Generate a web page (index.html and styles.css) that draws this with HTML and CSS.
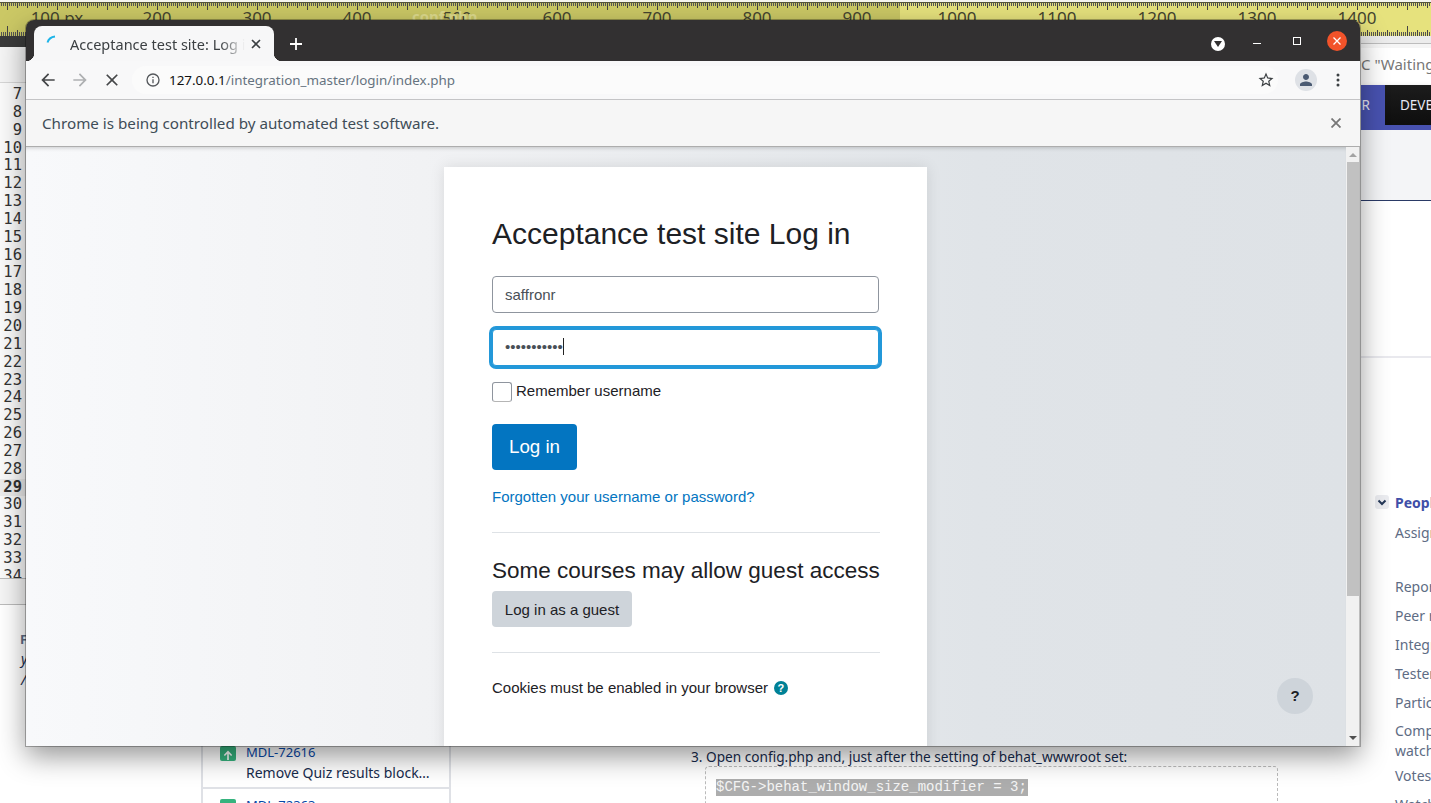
FILE: index.html
```html
<!DOCTYPE html>
<html lang="en">
<head>
  <meta charset="UTF-8">
  <title>Acceptance test site: Log in to the site</title>
  <link rel="stylesheet" href="styles.css">
</head>
<body>
  <div class="desktop">
    <div class="ruler">
      <span class="ruler-file">conf.php</span>
      <div class="ruler-marks">
        <span>100 px</span><span>200</span><span>300</span><span>400</span><span>500</span><span>600</span><span>700</span><span>800</span><span>900</span><span>1000</span><span>1100</span><span>1200</span><span>1300</span><span>1400</span>
      </div>
    </div>

    <div class="back">
      <div class="editor-col">
        <div class="editor-top"></div>
        <div class="gutter">
          <div>7</div><div>8</div><div>9</div><div>10</div><div>11</div><div>12</div><div>13</div><div>14</div><div>15</div><div>16</div><div>17</div><div>18</div><div>19</div><div>20</div><div>21</div><div>22</div><div>23</div><div>24</div><div>25</div><div>26</div><div>27</div><div>28</div><div class="current">29</div><div>30</div><div>31</div><div>32</div><div>33</div><div>34</div>
        </div>
        <div class="editor-status"></div>
        <div class="field-label">F</div>
        <div class="field-text">y</div>
        <div class="field-text">/</div>
      </div>

      <div class="issues-col">
        <div class="issue">
          <span class="issue-icon"><svg viewBox="0 0 16 16" width="16" height="16"><path d="M8 3.500 3.800 8l1.100 1.100L7.200 6.700V13h1.600V6.700l2.300 2.400L12.200 8z" fill="#fff"/></svg></span>
          <div>
            <div class="issue-key">MDL-72616</div>
            <div class="issue-name">Remove Quiz results block…</div>
          </div>
        </div>
        <div class="issue">
          <span class="issue-icon"></span>
          <div>
            <div class="issue-key">MDL-72363</div>
          </div>
        </div>
      </div>

      <div class="steps-col">
        <div class="step">3. Open config.php and, just after the setting of behat_wwwroot set:</div>
        <div class="code-box"><code>$CFG-&gt;behat_window_size_modifier = 3;</code></div>
      </div>

      <div class="side-col">
        <div class="side-bar"></div>
        <div class="side-search">C "Waiting for</div>
        <div class="side-nav">
          <span class="nav-purple">ER</span>
          <span class="nav-black">DEVELOP</span>
        </div>
        <div class="side-sub"></div>
        <div class="side-body"></div>
        <div class="people">
          <div class="people-head">
            <span class="toggle"><svg viewBox="0 0 14 14" width="14" height="14"><path d="M3.500 5.500 7 9l3.500-3.500" fill="none" stroke="#253858" stroke-width="2"/></svg></span>
            <b>People</b>
          </div>
          <div class="people-row assign">Assignee</div>
          <div class="people-row">Reporter</div>
          <div class="people-row">Peer reviewer</div>
          <div class="people-row">Integrator</div>
          <div class="people-row">Tester</div>
          <div class="people-row">Participants</div>
          <div class="people-row double">Component<br>watchers</div>
          <div class="people-row">Votes</div>
          <div class="people-row">Watchers</div>
        </div>
      </div>
    </div>

    <div class="browser">
      <div class="titlebar">
        <div class="tab">
          <svg class="spinner" viewBox="0 0 12 10" width="12" height="10"><path d="M1.500 7.500C2.500 4 5 2 9 1.500" fill="none" stroke="#1eb4e8" stroke-width="2"/></svg>
          <span class="tab-title">Acceptance test site: Log in to the site</span>
          <svg class="tab-close" viewBox="0 0 10 10" width="10" height="10"><path d="M1 1l8 8M9 1l-8 8" stroke="#3c4043" stroke-width="1.600"/></svg>
        </div>
        <svg class="new-tab" viewBox="0 0 12 12" width="12" height="12"><path d="M6 0v12M0 6h12" stroke="#fff" stroke-width="1.800"/></svg>
        <div class="win-controls">
          <span class="win-menu"><svg viewBox="0 0 8 6" width="8" height="6"><path d="M0 0h8L4 6z" fill="#323031"/></svg></span>
          <span class="win-min"></span>
          <span class="win-max"></span>
          <span class="win-close"><svg viewBox="0 0 10 10" width="10" height="10"><path d="M1.500 1.500l7 7M8.500 1.500l-7 7" stroke="#fff" stroke-width="1.300"/></svg></span>
        </div>
      </div>

      <div class="toolbar">
        <svg class="tool" viewBox="0 0 24 24" width="20" height="20"><path fill="#454749" d="M20 11H7.830l5.590-5.590L12 4l-8 8 8 8 1.410-1.410L7.830 13H20v-2z"/></svg>
        <svg class="tool" viewBox="0 0 24 24" width="20" height="20"><path fill="#aeb0b2" d="M4 11h12.170l-5.590-5.590L12 4l8 8-8 8-1.410-1.410L16.170 13H4v-2z"/></svg>
        <svg class="tool" viewBox="0 0 24 24" width="20" height="20"><path fill="#454749" d="M19 6.410 17.590 5 12 10.590 6.410 5 5 6.410 10.590 12 5 17.590 6.410 19 12 13.410 17.590 19 19 17.590 13.410 12z"/></svg>
        <div class="omnibox">
          <svg viewBox="0 0 24 24" width="16" height="16"><path fill="#55585c" d="M11 7h2v2h-2zm0 4h2v6h-2zm1-9a10 10 0 1 0 0 20 10 10 0 0 0 0-20zm0 18a8 8 0 1 1 0-16 8 8 0 0 1 0 16z"/></svg>
          <span class="url"><b>127.0.0.1</b>/integration_master/login/index.php</span>
          <svg class="star" viewBox="0 0 24 24" width="18" height="18"><path fill="#3c4043" d="M22 9.240l-7.190-.620L12 2 9.190 8.630 2 9.240l5.460 4.730L5.820 21 12 17.270 18.180 21l-1.630-7.030L22 9.240zM12 15.400l-3.760 2.270 1-4.280-3.320-2.880 4.380-.380L12 6.100l1.710 4.040 4.380.380-3.320 2.880 1 4.280L12 15.400z"/></svg>
        </div>
        <span class="avatar"><svg viewBox="0 0 24 24" width="18" height="18"><path fill="#4a5a72" d="M12 12c2.200 0 4-1.800 4-4s-1.800-4-4-4-4 1.800-4 4 1.800 4 4 4zm0 2c-2.700 0-8 1.300-8 4v2h16v-2c0-2.700-5.300-4-8-4z"/></svg></span>
        <svg class="dots" viewBox="0 0 4 14" width="4" height="14"><circle cx="2" cy="2" r="1.500" fill="#3c4043"/><circle cx="2" cy="7" r="1.500" fill="#3c4043"/><circle cx="2" cy="12" r="1.500" fill="#3c4043"/></svg>
      </div>

      <div class="infobar">
        <span>Chrome is being controlled by automated test software.</span>
        <svg viewBox="0 0 10 10" width="10" height="10"><path d="M.5.500l9 9M9.500.500l-9 9" stroke="#777" stroke-width="1.800"/></svg>
      </div>

      <div class="viewport">
        <div class="page">
          <div class="login-card">
            <h1>Acceptance test site Log in</h1>
            <input class="field" type="text" value="saffronr">
            <div class="field field-focus"><span>•••••••••••</span><i class="caret"></i></div>
            <label class="remember"><span class="checkbox"></span>Remember username</label>
            <button class="btn-primary">Log in</button>
            <p class="forgot"><a href="#">Forgotten your username or password?</a></p>
            <hr>
            <h2>Some courses may allow guest access</h2>
            <button class="btn-guest">Log in as a guest</button>
            <hr class="rule-two">
            <p class="cookies">Cookies must be enabled in your browser <span class="help">?</span></p>
          </div>
          <span class="help-fab">?</span>
        </div>
        <div class="scrollbar">
          <span class="arrow-up"></span>
          <span class="thumb"></span>
          <span class="arrow-down"></span>
        </div>
      </div>
    </div>
  </div>
</body>
</html>
```

FILE: styles.css
```css
* {
  box-sizing: border-box;
}

html, body {
  margin: 0;
  height: 100%;
  overflow: hidden;
  background: #fff;
}

.desktop {
  position: relative;
  width: 1431px;
  height: 803px;
  overflow: hidden;
  display: flex;
  flex-direction: column;
  font-family: "Noto Sans", sans-serif;
}

/* screen ruler across the top */
.ruler {
  position: relative;
  height: 36px;
  flex: none;
  background:
    linear-gradient(#55553a, #55553a) 0 2px / 100% 1px no-repeat,
    linear-gradient(90deg, #444 1px, transparent 1px) 7px 3px / 50px 7px repeat-x,
    linear-gradient(90deg, #444 1px, transparent 1px) 7px 3px / 10px 5px repeat-x,
    linear-gradient(90deg, #555 1px, transparent 1px) 1px 3px / 2px 3px repeat-x,
    linear-gradient(90deg, #444 1px, transparent 1px) 7px 26px / 50px 10px repeat-x,
    linear-gradient(90deg, #444 1px, transparent 1px) 7px 30px / 10px 6px repeat-x,
    linear-gradient(90deg, #555 1px, transparent 1px) 1px 32px / 2px 4px repeat-x,
    linear-gradient(#f4f4ee, #f4f4ee) 0 0 / 100% 2px no-repeat,
    linear-gradient(90deg, #cbc865 900px, #e6e27d 900px);
}

.ruler-file {
  position: absolute;
  left: 412px;
  top: 6px;
  font-size: 15px;
  font-weight: 700;
  color: #dedb8e;
}

.ruler-marks {
  display: flex;
  padding: 7px 0 0 7px;
  font-size: 17px;
  line-height: 22px;
  color: #45452f;
}

.ruler-marks span {
  width: 100px;
  flex: none;
  text-align: center;
}

/* windows behind the browser */
.back {
  flex: 1;
  display: grid;
  grid-template-columns: 201px 250px 1fr 70px;
  min-height: 0;
}

.editor-col {
  overflow: hidden;
}

.editor-top {
  height: 47px;
  background: linear-gradient(#3b3b3b 11px, #f5f5f5 11px);
  border-bottom: 1px solid #d6d6d6;
}

.gutter {
  height: 495px;
  padding-top: 3px;
  overflow: hidden;
  background: #fafafa;
  font-family: "DejaVu Sans Mono", monospace;
  font-size: 15.500px;
  line-height: 17.850px;
  color: #333;
}

.gutter div {
  width: 22px;
  text-align: right;
}

.gutter .current {
  width: 100%;
  padding-right: 179px;
  background: #ececec;
  font-weight: 700;
}

.editor-status {
  height: 27px;
  background: #f5f5f5;
  border-top: 1px solid #bbb;
  border-bottom: 1px solid #bbb;
}

.field-label {
  margin: 25px 0 0 20px;
  font-size: 13px;
  font-weight: 700;
  color: #5e6c84;
}

.field-text {
  margin-left: 21px;
  font-size: 14px;
  line-height: 21px;
  font-style: italic;
  color: #172b4d;
}

.issues-col {
  padding-top: 700px;
  overflow: hidden;
}

.issue {
  display: flex;
  gap: 10px;
  height: 53px;
  padding: 10px 0 0 17px;
  border-left: 2px solid #dfe1e6;
  border-right: 2px solid #dfe1e6;
  border-bottom: 2px solid #dfe1e6;
}

.issue-icon {
  width: 16px;
  height: 15px;
  flex: none;
  border-radius: 2px;
  background: #36b37e;
}

.issue-key {
  font-size: 13px;
  line-height: 13px;
  color: #0747a6;
}

.issue-name {
  margin-top: 4px;
  font-size: 14px;
  line-height: 20px;
  color: #172b4d;
  white-space: nowrap;
}

.steps-col {
  padding: 711px 0 0 240px;
  overflow: hidden;
}

.step {
  font-size: 13.650px;
  line-height: 20px;
  color: #172b4d;
}

.code-box {
  width: 573px;
  height: 60px;
  margin: -1px 0 0 14px;
  padding: 12px 10px;
  border: 1px dashed #bbb;
  border-radius: 4px;
}

.code-box code {
  display: block;
  width: 312px;
  background: #adadad;
  font-family: "Liberation Mono", monospace;
  font-size: 14px;
  line-height: 17px;
  color: #f4f4f4;
}

.side-col {
  overflow: hidden;
  white-space: nowrap;
  background: #fff;
}

.side-bar {
  height: 12px;
  background: linear-gradient(#ececec 7px, #bdbdbd 7px, #bdbdbd 8px, #f5f5f5 8px);
}

.side-search {
  height: 32px;
  background: #fff;
  font-size: 15px;
  line-height: 32px;
  color: #777;
}

.side-nav {
  display: flex;
  height: 45px;
  margin-top: 5px;
  background: #4852b0;
  font-size: 13.500px;
  color: #e8e8f4;
  box-shadow: 0 3px 6px rgba(0, 0, 0, .3);
}

.nav-purple {
  width: 24px;
  flex: none;
  line-height: 40px;
  text-indent: -7px;
}

.nav-black {
  height: 40px;
  padding-left: 15px;
  flex: 1;
  background: linear-gradient(#1c1c1c, #0e0e0e);
  line-height: 40px;
}

.side-sub {
  height: 71px;
  background: #f4f5f7;
  border-bottom: 1px solid #2a3a66;
}

.side-body {
  height: 157px;
  border-bottom: 2px solid #e9e9ee;
}

.people {
  padding: 134px 0 0 14px;
  font-size: 14px;
  color: #5e6c84;
}

.people-head {
  display: flex;
  align-items: center;
  gap: 6px;
  height: 20px;
  color: #3f4fa8;
}

.toggle {
  display: flex;
  width: 14px;
  height: 14px;
  border-radius: 3px;
  background: #ebecf0;
}

.people-row {
  height: 29px;
  padding-left: 20px;
  line-height: 29px;
}

.assign {
  height: 54px;
  margin-top: 6px;
  line-height: 29px;
}

.double {
  height: 44px;
  padding-top: 4px;
  line-height: 20px;
}

/* the browser window on top */
.browser {
  position: absolute;
  left: 26px;
  top: 20px;
  width: 1334px;
  height: 726px;
  display: flex;
  flex-direction: column;
  overflow: hidden;
  border-radius: 8px 8px 0 0;
  box-shadow: 0 0 0 1px rgba(0, 0, 0, .28), 0 10px 28px rgba(0, 0, 0, .42);
}

.titlebar {
  height: 41px;
  flex: none;
  display: flex;
  align-items: flex-end;
  padding-left: 8px;
  background: #323031;
}

.tab {
  position: relative;
  width: 240px;
  height: 35px;
  display: flex;
  align-items: center;
  padding: 0 12px;
  border-radius: 8px 8px 0 0;
  background: #f7f7f8;
  font-size: 14.500px;
  color: #3c4043;
}

.tab::before,
.tab::after {
  content: "";
  position: absolute;
  bottom: 0;
  width: 8px;
  height: 8px;
}

.tab::before {
  left: -8px;
  background: radial-gradient(circle at 0 0, #323031 8px, #f7f7f8 8.500px);
}

.tab::after {
  right: -8px;
  background: radial-gradient(circle at 100% 0, #323031 8px, #f7f7f8 8.500px);
}

.spinner {
  flex: none;
  margin-bottom: 8px;
}

.tab-title {
  width: 175px;
  margin-left: 12px;
  flex: none;
  overflow: hidden;
  white-space: nowrap;
  -webkit-mask-image: linear-gradient(90deg, #000 150px, transparent 175px);
  mask-image: linear-gradient(90deg, #000 150px, transparent 175px);
}

.tab-close {
  margin-left: 6px;
  flex: none;
}

.new-tab {
  margin: 0 0 11px 16px;
}

.win-controls {
  margin-left: auto;
  align-self: stretch;
  display: flex;
  align-items: center;
  padding-right: 13px;
}

.win-menu {
  width: 14px;
  height: 14px;
  margin-top: 7px;
  display: flex;
  align-items: center;
  justify-content: center;
  border-radius: 50%;
  background: #fff;
}

.win-min {
  width: 8px;
  height: 1px;
  margin: 6px 0 0 28px;
  background: #fff;
}

.win-max {
  width: 8px;
  height: 8px;
  margin: 0 0 0 32px;
  border: 1px solid #fff;
}

.win-close {
  width: 20px;
  height: 20px;
  margin-left: 26px;
  display: flex;
  align-items: center;
  justify-content: center;
  border-radius: 50%;
  background: #f2532a;
}

.toolbar {
  height: 39px;
  flex: none;
  display: flex;
  align-items: center;
  padding: 0 20px 0 12px;
  background: #f8f8f9;
  border-bottom: 1px solid #c4c4c6;
}

.tool {
  margin-right: 12px;
  flex: none;
}

.omnibox {
  flex: 1;
  height: 28px;
  display: flex;
  align-items: center;
  gap: 8px;
  margin-left: -2px;
  padding: 0 3px 0 13px;
  border-radius: 14px;
  background: #fbfbfb;
}

.url {
  font-size: 13.400px;
  color: #667380;
}

.url b {
  font-weight: 400;
  color: #111;
}

.star {
  margin-left: auto;
}

.avatar {
  width: 22px;
  height: 22px;
  margin-left: 17px;
  display: flex;
  align-items: center;
  justify-content: center;
  border-radius: 50%;
  background: #dee1e6;
}

.dots {
  margin-left: 19px;
}

.infobar {
  height: 47px;
  flex: none;
  display: flex;
  align-items: center;
  justify-content: space-between;
  padding: 0 19px 0 16px;
  background: #f6f6f6;
  border-bottom: 1px solid #adadad;
  font-size: 15.200px;
  color: #3f4d58;
}

.viewport {
  flex: 1;
  min-height: 0;
  display: flex;
}

.page {
  position: relative;
  flex: 1;
  display: flex;
  justify-content: center;
  padding-top: 20px;
  overflow: hidden;
  background: linear-gradient(90deg, #f8f9fb, #f1f2f4 30%, #e0e4e8 72%, #dee2e6);
  box-shadow: inset 0 4px 4px -3px rgba(0, 0, 0, .18);
  font-family: "Liberation Sans", sans-serif;
  font-size: 15px;
  color: #1d2125;
}

.login-card {
  width: 483px;
  height: 640px;
  flex: none;
  margin-right: 1px;
  padding: 49px 47px 0 48px;
  background: #fff;
  box-shadow: 0 0 14px rgba(0, 0, 0, .1);
}

.login-card h1 {
  margin: 0 0 24px;
  font-size: 30px;
  font-weight: 400;
  line-height: 36px;
}

.login-card h2 {
  margin: 24px 0 7px;
  font-size: 22.500px;
  font-weight: 400;
  line-height: 27px;
  white-space: nowrap;
}

.field {
  display: block;
  width: 387px;
  height: 37px;
  margin-bottom: 16px;
  padding: 0 12px;
  border: 1px solid #8f959e;
  border-radius: 4px;
  background: #fff;
  font-family: inherit;
  font-size: 15px;
  color: #495057;
}

.field-focus {
  display: flex;
  align-items: center;
  padding-bottom: 2px;
  border-color: #2398d9;
  box-shadow: 0 0 0 3px #2398d9;
}

.caret {
  width: 1px;
  height: 17px;
  background: #222;
}

.remember {
  display: flex;
  align-items: flex-start;
  gap: 4px;
  height: 20px;
  margin-top: 15px;
  font-size: 15px;
  line-height: 18px;
}

.checkbox {
  width: 20px;
  height: 20px;
  border: 1px solid #8f959e;
  border-bottom-color: #b5b5b5;
  border-radius: 3px;
  background: #fff;
}

.btn-primary {
  display: block;
  width: 85px;
  height: 46px;
  margin-top: 22px;
  border: 0;
  border-radius: 4px;
  background: #0375c1;
  font-family: inherit;
  font-size: 18.750px;
  color: #fff;
}

.forgot {
  margin: 18px 0 0;
  line-height: 18px;
}

.forgot a {
  color: #0375c1;
  text-decoration: none;
}

.login-card hr {
  width: 388px;
  height: 1px;
  margin: 26px 0 0;
  border: 0;
  background: #dee2e6;
}

.login-card hr.rule-two {
  margin-top: 25px;
}

.btn-guest {
  display: block;
  width: 140px;
  height: 36px;
  border: 0;
  border-radius: 4px;
  background: #ced4da;
  font-family: inherit;
  font-size: 15px;
  color: #1d2125;
}

.cookies {
  display: flex;
  align-items: center;
  gap: 6px;
  margin: 26px 0 0;
  line-height: 18px;
}

.help {
  width: 14px;
  height: 14px;
  border-radius: 50%;
  background: #008196;
  font-size: 11px;
  font-weight: 700;
  line-height: 14px;
  text-align: center;
  color: #fff;
}

.help-fab {
  position: absolute;
  right: 33px;
  bottom: 32px;
  width: 36px;
  height: 36px;
  border-radius: 50%;
  background: #ced4da;
  font-size: 15px;
  font-weight: 700;
  line-height: 36px;
  text-align: center;
  color: #1d2125;
}

.scrollbar {
  width: 14px;
  flex: none;
  display: flex;
  flex-direction: column;
  align-items: center;
  background: #f1f1f1;
  border-right: 1px solid #bdbdbd;
}

.arrow-up,
.arrow-down {
  width: 0;
  height: 0;
  border-left: 4px solid transparent;
  border-right: 4px solid transparent;
}

.arrow-up {
  margin-top: 6px;
  border-bottom: 4px solid #a3a3a3;
}

.arrow-down {
  margin-top: auto;
  margin-bottom: 6px;
  border-top: 4px solid #505050;
}

.thumb {
  width: 12px;
  height: 434px;
  margin-top: 5px;
  background: #c1c1c1;
}
```
